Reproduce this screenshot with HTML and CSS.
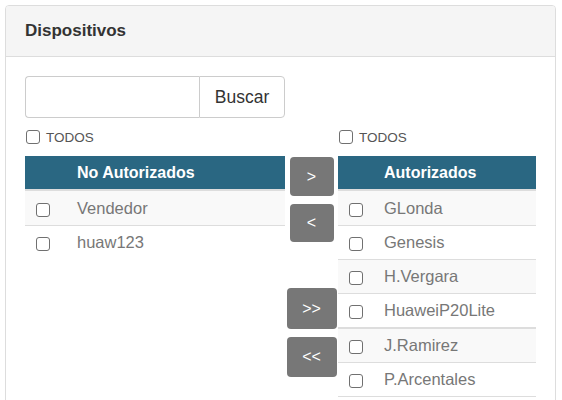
FILE: index.html
```html
<!DOCTYPE html>
<html lang="es">
<head>
<meta charset="utf-8">
<title>Dispositivos</title>
<link rel="stylesheet" href="styles.css">
</head>
<body>
<div class="panel">
  <div class="panel-heading"><h3 class="panel-title">Dispositivos</h3></div>
  <div class="panel-body">
    <div class="layout">
      <div class="search">
        <input class="search-input" type="text">
        <button class="search-btn" type="button">Buscar</button>
      </div>
      <label class="todos todos-left"><input type="checkbox" class="chk"><span>TODOS</span></label>
      <label class="todos todos-right"><input type="checkbox" class="chk"><span>TODOS</span></label>

      <table class="list list-left">
        <thead><tr><th class="c-chk"></th><th>No Autorizados</th></tr></thead>
        <tbody>
          <tr class="odd first"><td class="c-chk"><input type="checkbox" class="chk"></td><td>Vendedor</td></tr>
          <tr><td class="c-chk"><input type="checkbox" class="chk"></td><td>huaw123</td></tr>
        </tbody>
      </table>

      <div class="moves">
        <button class="mv mv-one" type="button">&gt;</button>
        <button class="mv mv-one mv-lt" type="button">&lt;</button>
        <button class="mv mv-all mv-gap" type="button">&gt;&gt;</button>
        <button class="mv mv-all mv-ltlt" type="button">&lt;&lt;</button>
      </div>

      <table class="list list-right">
        <thead><tr><th class="c-chk"></th><th>Autorizados</th></tr></thead>
        <tbody>
          <tr class="odd first"><td class="c-chk"><input type="checkbox" class="chk"></td><td>GLonda</td></tr>
          <tr><td class="c-chk"><input type="checkbox" class="chk"></td><td>Genesis</td></tr>
          <tr class="odd"><td class="c-chk"><input type="checkbox" class="chk"></td><td>H.Vergara</td></tr>
          <tr><td class="c-chk"><input type="checkbox" class="chk"></td><td>HuaweiP20Lite</td></tr>
          <tr class="odd group-start"><td class="c-chk"><input type="checkbox" class="chk"></td><td>J.Ramirez</td></tr>
          <tr class="last"><td class="c-chk"><input type="checkbox" class="chk"></td><td>P.Arcentales</td></tr>
        </tbody>
      </table>
    </div>
  </div>
</div>
</body>
</html>
```

FILE: styles.css
```css
* { box-sizing: border-box; }
html, body { margin: 0; padding: 0; background: #fff; }
body {
  font-family: "Liberation Sans", Arial, sans-serif;
  color: #333;
  overflow: hidden;
}
.panel {
  margin: 5px 0 0 5px;
  width: 551px;
  border: 1px solid #ddd;
  border-radius: 4px;
  min-height: 420px;
}
.panel-heading {
  height: 51px;
  background: #f5f5f5;
  border-bottom: 1px solid #ddd;
  border-radius: 3px 3px 0 0;
  display: flex;
  align-items: center;
  padding: 0 19px;
}
.panel-title {
  margin: 0;
  font-size: 17px;
  font-weight: bold;
  color: #333;
}
.panel-body {
  padding: 19px 19px;
}
.layout {
  display: grid;
  grid-template-columns: 260px 53px 198px;
  grid-template-rows: 42px 38px auto;
}
.search {
  grid-column: 1;
  grid-row: 1;
  display: flex;
  height: 42px;
}
.search-input {
  flex: 1;
  min-width: 0;
  height: 42px;
  border: 1px solid #ccc;
  border-right: 0;
  border-radius: 4px 0 0 4px;
  padding: 0 12px;
  font: inherit;
}
.search-btn {
  width: 86px;
  height: 42px;
  border: 1px solid #ccc;
  border-radius: 0 4px 4px 0;
  background: #fff;
  color: #333;
  font-family: inherit;
  font-size: 17.5px;
  padding: 0;
}
.todos {
  grid-row: 2;
  display: flex;
  align-items: center;
  gap: 6px;
  font-size: 13.5px;
  color: #555;
  padding-left: 1px;
}
.todos-left { grid-column: 1; }
.todos-right { grid-column: 3; }
.chk {
  appearance: none;
  -webkit-appearance: none;
  width: 14px;
  height: 14px;
  margin: 0;
  border: 1px solid #707070;
  border-radius: 3px;
  background: #fff;
  display: block;
}
.list {
  grid-row: 3;
  align-self: start;
  border-collapse: separate;
  border-spacing: 0;
  width: 100%;
  font-size: 16.5px;
}
.list-left { grid-column: 1; }
.list-right { grid-column: 3; }
.list th {
  background: #2a6782;
  color: #fff;
  font-size: 16px;
  font-weight: bold;
  text-align: left;
  height: 35px;
  padding: 0;
  border-bottom: 2px solid #ddd;
}
.list td {
  padding: 6px 0;
  line-height: 21px;
  color: #777;
}
.list tbody tr.first td { padding-top: 7px; }
.list tbody tr + tr td { border-top: 1px solid #ddd; }
.list tbody tr.group-start td { border-top: 2px solid #ddd; }
.list tbody tr.last td { border-bottom: 1px solid #ddd; }
.list tr.odd td { background: #f9f9f9; }
.list-left .c-chk { width: 52px; padding-left: 11px; }
.list-right .c-chk { width: 46px; padding-left: 11px; }
.c-chk .chk { margin-top: 2px; }

.moves {
  grid-column: 2;
  grid-row: 3;
  display: flex;
  flex-direction: column;
  align-items: center;
  padding-top: 1px;
}
.mv {
  border: 0;
  border-radius: 4px;
  background: #777;
  color: #fff;
  font-family: inherit;
  font-size: 16px;
  padding: 0;
}
.mv-one { width: 44px; height: 39px; }
.mv-lt { margin-top: 8px; height: 38px; }
.mv-all { width: 50px; height: 41px; }
.mv-gap { margin-top: 46px; }
.mv-ltlt { margin-top: 8px; height: 40px; }
```
